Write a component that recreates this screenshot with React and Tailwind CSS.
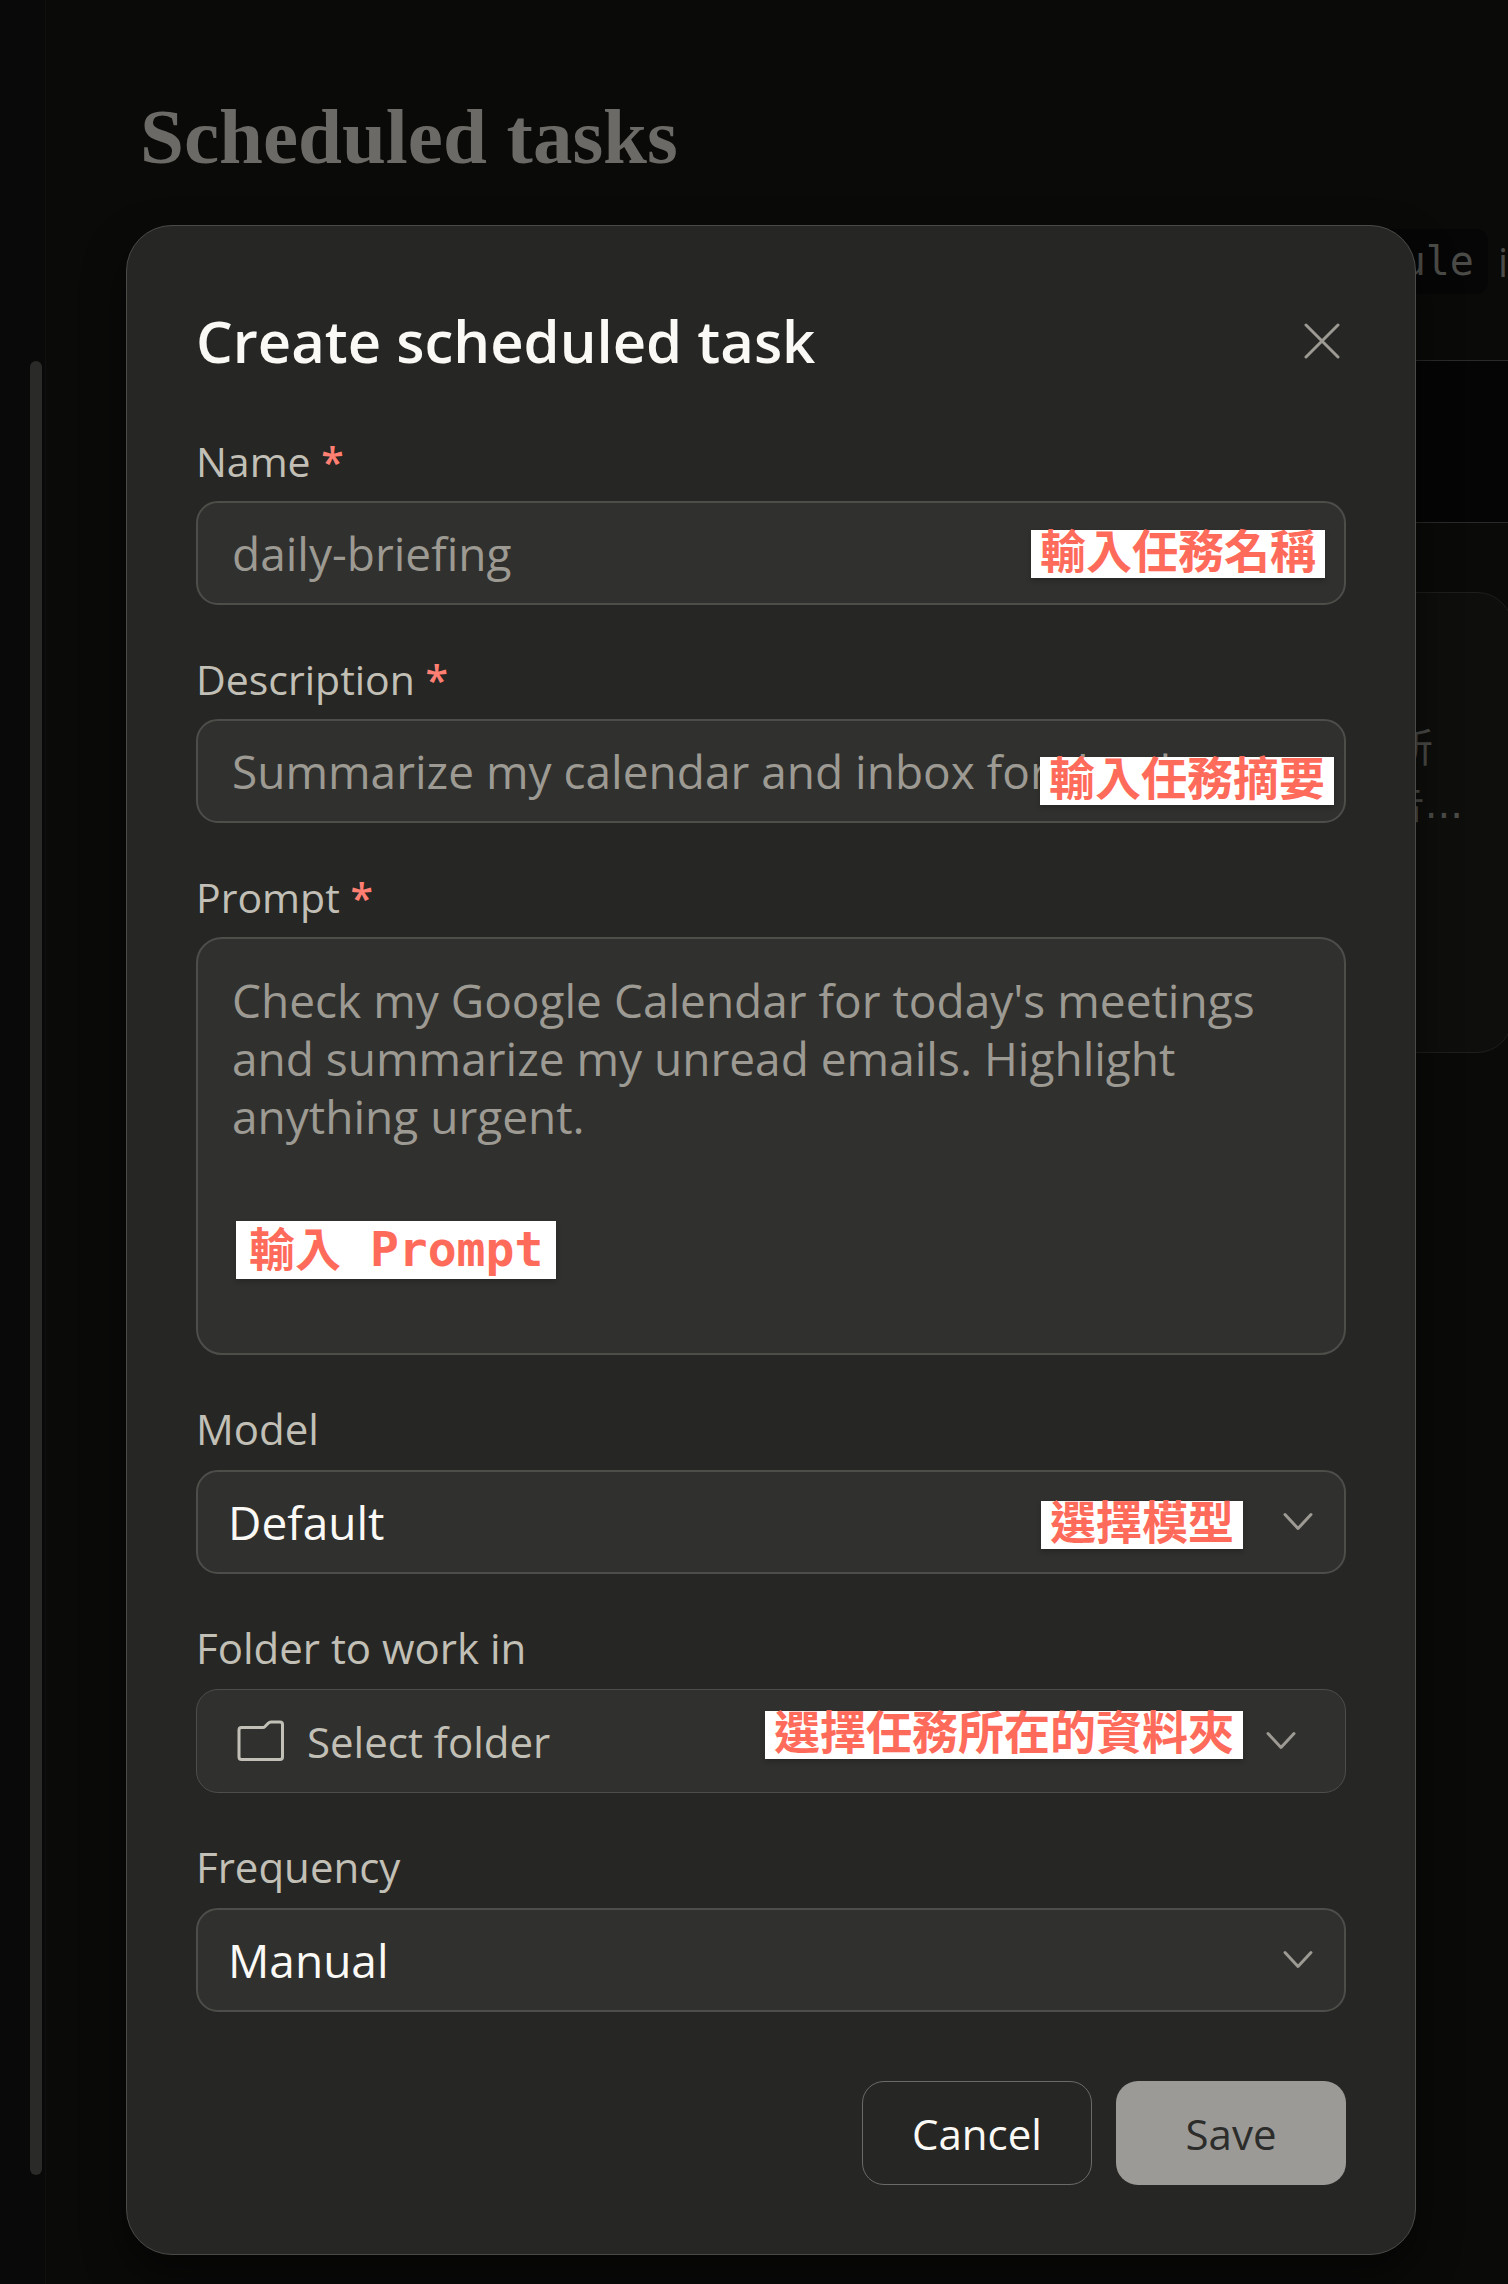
import { useState } from "react"

const labelBase = "block leading-[58px] text-[#c2c0b6]"
const fieldBase = "block w-full border-2 border-[#4d4d4a] bg-[#30302e] text-[46px] text-[#faf9f5] placeholder:text-[#9c9a92] placeholder:opacity-100 outline-none"

const Chevron = ({ className }) => (
    <svg className={className} width="32" height="22" viewBox="0 0 32 22" fill="none" stroke="#9c9a92" strokeWidth="3" strokeLinecap="round" strokeLinejoin="round" aria-hidden="true">
        <path d="M3 3.5 L16 17.5 L29 3.5" />
    </svg>
)

const FolderIcon = () => (
    <svg width="48" height="42" viewBox="0 0 48 42" fill="none" stroke="#c2c0b6" strokeWidth="3" strokeLinejoin="round" aria-hidden="true">
        <path d="M4.5 7.5 H26 Q27 7.5 27.8 6.7 L31.2 3.2 Q32.4 2 34 2 H43 Q45.5 2 45.5 4.5 V37 Q45.5 39.5 43 39.5 H4.5 Q2 39.5 2 37 V10 Q2 7.5 4.5 7.5 Z" />
    </svg>
)

// red on white note lying over a field
const Note = ({ className, children }) => (
    <span className={`pointer-events-none absolute whitespace-nowrap bg-white font-['DejaVu_Sans_Mono','Noto_Sans_CJK_TC',monospace] text-[46px] font-bold text-[#ff6b5b] shadow-[0_3px_5px_rgba(0,0,0,0.2)] ${className}`}>
        {children}
    </span>
)

const RequiredLabel = ({ htmlFor, children }) => (
    <label htmlFor={htmlFor} className={`${labelBase} mb-[11px] text-[41px]`}>
        {children} <span className="font-semibold text-[#ff8073]">*</span>
    </label>
)

const SelectField = ({ id, label, options, note }) => {
    const [value, setValue] = useState(options[0])

    return (
        <div>
            <label htmlFor={id} className={`${labelBase} mb-3 text-[42px] font-medium`}>{label}</label>
            <div className="relative">
                <select
                    id={id}
                    value={value}
                    onChange={e => setValue(e.target.value)}
                    className={`${fieldBase} h-[104px] appearance-none rounded-[22px] pl-[30px] pr-20`}
                >
                    {options.map(option => <option key={option}>{option}</option>)}
                </select>
                {note}
                <Chevron className="pointer-events-none absolute right-8 top-[41px]" />
            </div>
        </div>
    )
}

const Background = () => (
    <div className="flex min-h-screen" aria-hidden="true">
        <div className="flex w-[46px] shrink-0 justify-end border-r border-[#101010] bg-[#090909] pr-[3px]">
            <div className="mb-[109px] mt-[361px] w-3 rounded-full bg-[#2a2a28]" />
        </div>
        <div className="min-w-0 flex-1 pl-[94px]">
            <h1 className="pt-[92px] font-['Liberation_Serif',serif] text-[79px] font-bold leading-[90px] text-[#6b6a66]">Scheduled tasks</h1>
            <div className="mt-12 flex h-[63px] items-center justify-end text-[40px] text-[#4b4b48]">
                <code className="rounded-xl bg-[#060606] px-[14px] font-['DejaVu_Sans_Mono',monospace] leading-[65px]">/schedule</code>
                <span className="ml-[10px]">i</span>
            </div>
            <div className="mt-[67px] h-[163px] border-y border-[#2a2a28] bg-[#050505]" />
            <div className="mr-[-5px] mt-[69px] flex h-[461px] flex-col items-end rounded-[36px] border border-[#1e1e1c] bg-[#0e0e0c] pr-[49px] pt-[124px] font-['Noto_Sans_CJK_TC',sans-serif] text-[40px] leading-[56px] text-[#4b4b48]">
                <div className="pr-[30px]">所</div>
                <div>告<span className="font-['DejaVu_Sans',sans-serif]">...</span></div>
            </div>
        </div>
    </div>
)

const App = () => {
    const [name, setName] = useState("")
    const [description, setDescription] = useState("")
    const [prompt, setPrompt] = useState("")

    return (
        <div className="relative min-h-screen overflow-hidden bg-[#0a0a09] font-['Open_Sans','Noto_Sans_CJK_TC',sans-serif]">
            <Background />

            <div className="absolute inset-0 pb-[29px] pl-[126px] pr-[92px] pt-[225px]">
                <form
                    role="dialog"
                    aria-labelledby="dialog-title"
                    onSubmit={e => e.preventDefault()}
                    className="flex flex-col gap-[45px] rounded-[46px] border border-[#4a4a47] bg-[#262624] p-[69px] shadow-[0_20px_40px_rgba(0,0,0,0.5)]"
                >
                    <div className="flex items-center justify-between">
                        <h2 id="dialog-title" className="text-[58px] font-semibold leading-[92px] text-[#faf9f5]">Create scheduled task</h2>
                        <button type="button" aria-label="Close" className="flex size-12 items-center justify-center">
                            <svg width="36" height="36" viewBox="0 0 36 36" fill="none" stroke="#9c9a92" strokeWidth="3" strokeLinecap="round" aria-hidden="true">
                                <path d="M2 2 L34 34 M34 2 L2 34" />
                            </svg>
                        </button>
                    </div>

                    <div>
                        <RequiredLabel htmlFor="task-name">Name</RequiredLabel>
                        <div className="relative">
                            <input
                                id="task-name"
                                type="text"
                                value={name}
                                onChange={e => setName(e.target.value)}
                                placeholder="daily-briefing"
                                className={`${fieldBase} h-[104px] rounded-[22px] px-[34px]`}
                            />
                            <Note className="right-[21px] top-[29px] px-[9px] pb-1 leading-[44px]">輸入任務名稱</Note>
                        </div>
                    </div>

                    <div>
                        <RequiredLabel htmlFor="task-description">Description</RequiredLabel>
                        <div className="relative">
                            <input
                                id="task-description"
                                type="text"
                                value={description}
                                onChange={e => setDescription(e.target.value)}
                                placeholder="Summarize my calendar and inbox for the day"
                                className={`${fieldBase} h-[104px] rounded-[22px] px-[34px]`}
                            />
                            <Note className="right-3 top-[38px] px-[9px] pb-1 leading-[44px]">輸入任務摘要</Note>
                        </div>
                    </div>

                    <div>
                        <RequiredLabel htmlFor="task-prompt">Prompt</RequiredLabel>
                        <div className="relative">
                            <textarea
                                id="task-prompt"
                                value={prompt}
                                onChange={e => setPrompt(e.target.value)}
                                placeholder="Check my Google Calendar for today's meetings and summarize my unread emails. Highlight anything urgent."
                                className={`${fieldBase} h-[418px] resize-none rounded-[26px] px-[34px] py-8 leading-[58px]`}
                            />
                            <Note className="left-10 top-[284px] px-[13px] leading-[57px]">輸入<span className="text-[48px]"> Prompt</span></Note>
                        </div>
                    </div>

                    <SelectField
                        id="task-model"
                        label="Model"
                        options={["Default"]}
                        note={<Note className="right-[103px] top-[31px] px-[9px] pb-1 leading-[44px]">選擇模型</Note>}
                    />

                    <div>
                        <label htmlFor="task-folder" className={`${labelBase} mb-3 text-[42px] font-medium`}>Folder to work in</label>
                        <div className="relative">
                            <button
                                id="task-folder"
                                type="button"
                                className="flex h-[104px] w-full items-center gap-[22px] rounded-[22px] border border-[#4d4d4a] bg-[#30302e] pl-10 pr-12 text-[42px] font-medium text-[#c2c0b6]"
                            >
                                <FolderIcon />
                                <span>Select folder</span>
                                <Chevron className="ml-auto" />
                            </button>
                            <Note className="right-[103px] top-[22px] px-[9px] pb-1 leading-[44px]">選擇任務所在的資料夾</Note>
                        </div>
                    </div>

                    <SelectField id="task-frequency" label="Frequency" options={["Manual"]} />

                    <div className="mt-6 flex justify-end gap-6 text-[42px] font-medium">
                        <button type="button" className="h-[104px] w-[230px] rounded-[22px] border border-[#6b6a66] text-[#faf9f5]">Cancel</button>
                        <button type="submit" className="h-[104px] w-[230px] rounded-[22px] bg-[#9b9a97] text-[#2c2c2a]">Save</button>
                    </div>
                </form>
            </div>
        </div>
    )
}

export default App
